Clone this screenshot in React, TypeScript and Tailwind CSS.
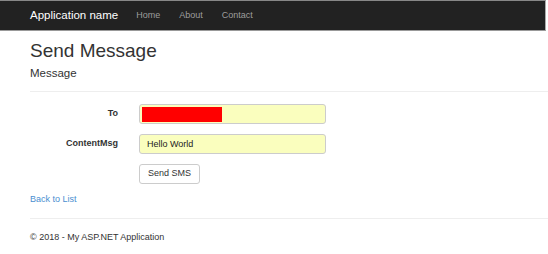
export default function App() {
  return (
    <div className="min-h-[254px] w-[548px] overflow-hidden bg-white font-['Liberation_Sans',Arial,sans-serif] text-[#333]">
      <nav className="flex h-[31px] items-center border-t border-r border-b border-t-[#888] border-r-[#aaa] border-b-[#999] bg-[#222] pl-[30px] mr-[2px]">
        <span className="mr-[18px] text-[11.5px] text-white">Application name</span>
        <ul className="flex gap-[19px] text-[9px] text-[#9d9d9d]">
          <li>Home</li>
          <li>About</li>
          <li>Contact</li>
        </ul>
      </nav>

      <main className="pl-[30px]">
        <h2 className="mt-[8px] text-[19px] leading-[24px]">Send Message</h2>
        <h4 className="mt-[3px] text-[11.5px] leading-[14px]">Message</h4>
        <hr className="mt-[11px] border-[#eee]" />

        <form className="mt-[12px] flex flex-col gap-[10px]">
          <div className="flex items-center">
            <label className="w-[88px] text-right text-[9px] font-bold">To</label>
            <div className="ml-[21px] flex h-[20px] w-[187px] items-center rounded-[3px] border border-[#ccc] bg-[#fafebe] px-[2px]">
              <span className="block h-[15px] w-[80px] bg-[#ff0000]" />
            </div>
          </div>
          <div className="flex items-center">
            <label className="w-[88px] text-right text-[9px] font-bold">ContentMsg</label>
            <input
              readOnly
              value="Hello World"
              className="ml-[21px] h-[20px] w-[187px] rounded-[3px] border border-[#ccc] bg-[#fafebe] px-[7px] text-[9px] text-[#222] outline-none"
            />
          </div>
          <div className="flex">
            <button
              type="button"
              className="ml-[109px] h-[20px] w-[61px] rounded-[3px] border border-[#ccc] bg-white text-[9px] text-[#333]"
            >
              Send SMS
            </button>
          </div>
        </form>

        <a className="mt-[9px] block text-[9px] text-[#4a8fd0]">Back to List</a>
        <hr className="mt-[11px] border-[#eee]" />
        <footer className="mt-[12px] text-[9px]">© 2018 - My ASP.NET Application</footer>
      </main>
    </div>
  );
}
